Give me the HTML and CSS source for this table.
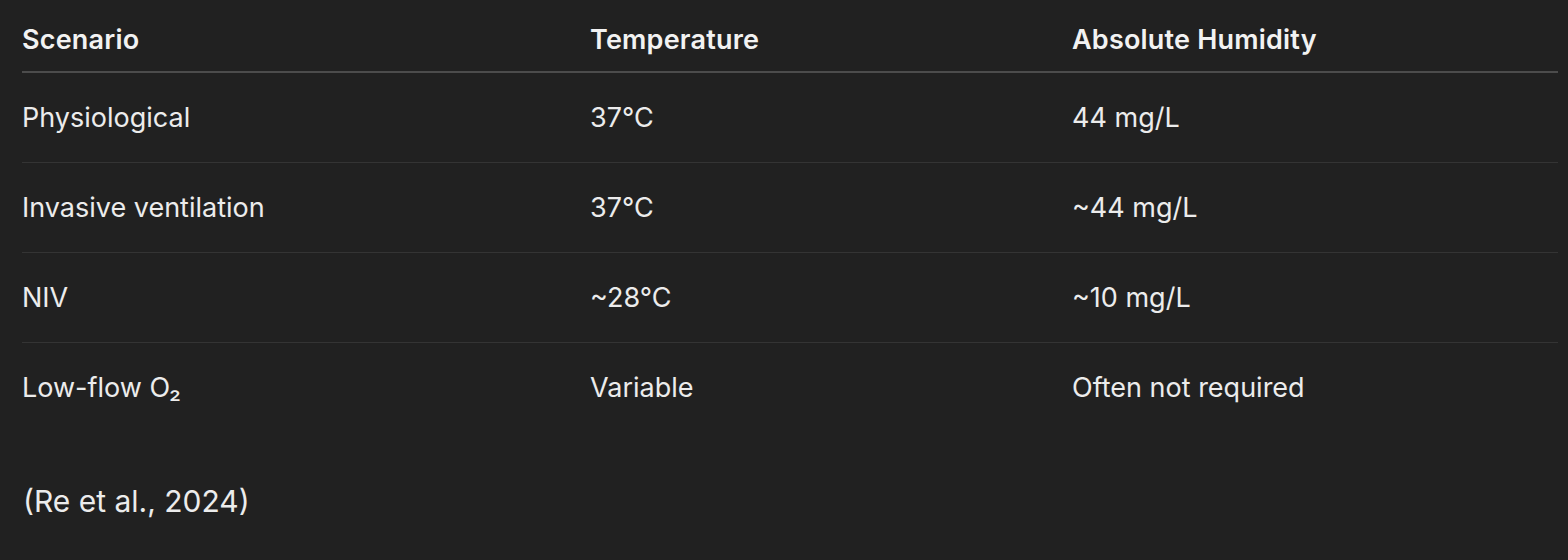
FILE: index.html
```html
<!DOCTYPE html>
<html lang="en">
<head>
<meta charset="utf-8">
<title>Humidity table</title>
<link rel="stylesheet" href="styles.css">
</head>
<body>
<main class="content">
  <table class="data">
    <colgroup>
      <col class="c1">
      <col class="c2">
      <col class="c3">
    </colgroup>
    <thead>
      <tr><th>Scenario</th><th>Temperature</th><th>Absolute Humidity</th></tr>
    </thead>
    <tbody>
      <tr><td>Physiological</td><td>37°C</td><td>44 mg/L</td></tr>
      <tr><td>Invasive ventilation</td><td>37°C</td><td>~44 mg/L</td></tr>
      <tr><td>NIV</td><td>~28°C</td><td>~10 mg/L</td></tr>
      <tr><td>Low-flow O₂</td><td>Variable</td><td>Often not required</td></tr>
    </tbody>
  </table>
  <p class="cite">(Re et al., 2024)</p>
</main>
</body>
</html>
```
FILE: styles.css
```css
html, body {
  margin: 0;
  padding: 0;
  background: #212121;
}
body {
  color: #ececec;
  font-family: Inter, "Noto Sans", "Liberation Sans", sans-serif;
  font-size: 27px;
}
.content {
  padding: 0 10px 0 22px;
}
.data {
  width: 1536px;
  border-collapse: collapse;
  table-layout: fixed;
}
.c1 { width: 568px; }
.c2 { width: 482px; }
.data th {
  text-align: left;
  font-weight: 600;
  line-height: 36px;
  padding: 22px 0 13px 0;
  border-bottom: 2px solid #4c4c4c;
  color: #f2f2f2;
  letter-spacing: 0.2px;
}
.data td {
  line-height: 36px;
  padding: 27px 0 26px 0;
  border-bottom: 1px solid #343434;
}
.data tbody tr:last-child td {
  border-bottom: none;
}
.cite {
  margin: 51px 0 0 1px;
  line-height: 36px;
  font-size: 30px;
}
```
